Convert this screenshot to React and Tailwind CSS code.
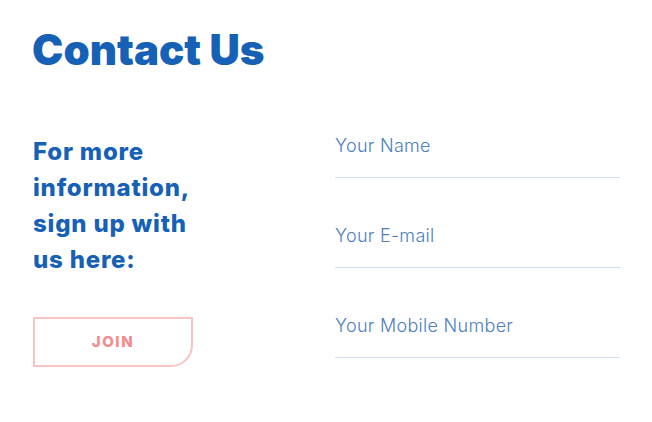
import React from "react";

const fields = ["Your Name", "Your E-mail", "Your Mobile Number"];

export default function App() {
  return (
    <div className="min-h-screen w-full bg-white font-['Inter',sans-serif]">
      <div className="px-8 pt-[29px]">
        <h1 className="text-[42px] leading-none font-black text-[#1660b6]">
          Contact Us
        </h1>

        <div className="mt-[63px] flex">
          <div className="w-[303px] shrink-0 pl-px">
            <p className="w-[180px] text-[24px] leading-[36px] font-extrabold tracking-[0.8px] text-[#1660b6]">
              For more information, sign up with us here:
            </p>
            <button
              type="button"
              className="mt-[39px] flex h-[50px] w-[160px] items-center justify-center rounded-br-[22px] border-2 border-[#f7c3c3] text-[15px] font-extrabold tracking-[1.6px] text-[#f28b8b]"
            >
              JOIN
            </button>
          </div>

          <div className="w-[286px]">
            {fields.map((f) => (
              <div key={f} className="mb-[46px] border-b border-[#d0e0f0] pb-[19px]">
                <div className="text-[18px] leading-[24px] font-light tracking-[0.3px] text-[#4d80bd]">
                  {f}
                </div>
              </div>
            ))}
          </div>
        </div>
      </div>
    </div>
  );
}
